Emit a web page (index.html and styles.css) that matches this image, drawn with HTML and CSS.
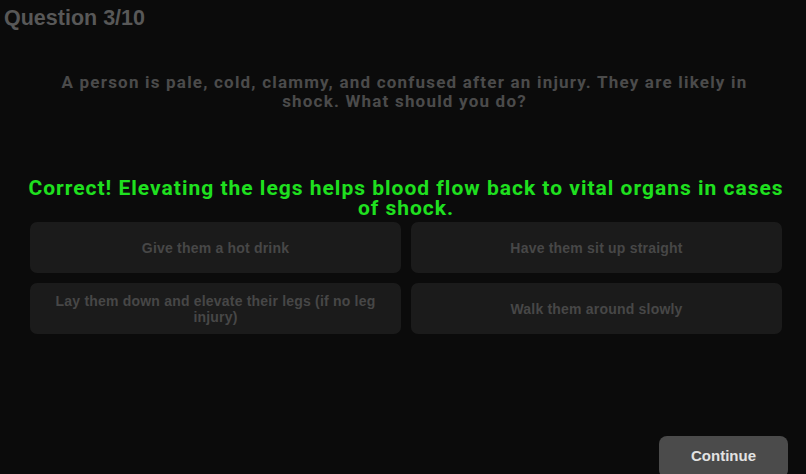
FILE: index.html
```html
<!DOCTYPE html>
<html lang="en">
<head>
<meta charset="utf-8">
<title>Quiz</title>
<link rel="stylesheet" href="styles.css">
</head>
<body>
  <main class="quiz">
    <header class="quiz-header">Question 3/10</header>
    <p class="question">A person is pale, cold, clammy, and confused after an injury. They are likely in shock. What should you do?</p>
    <p class="feedback">Correct! Elevating the legs helps blood flow back to vital organs in cases of shock.</p>
    <div class="options">
      <button class="option">Give them a hot drink</button>
      <button class="option">Have them sit up straight</button>
      <button class="option">Lay them down and elevate their legs (if no leg injury)</button>
      <button class="option">Walk them around slowly</button>
    </div>
    <div class="actions">
      <button class="continue">Continue</button>
    </div>
  </main>
</body>
</html>
```
FILE: styles.css
```css
html, body {
  margin: 0;
  padding: 0;
  height: 100%;
  overflow: hidden;
  background: #0b0b0b;
}

.quiz {
  display: flex;
  flex-direction: column;
  min-height: 100vh;
  font-family: "Liberation Sans", Arial, sans-serif;
  font-weight: bold;
}

.quiz-header {
  padding: 6px 4px;
  font-size: 21.5px;
  line-height: 24px;
  color: #585858;
}

.question {
  margin: 37px 0 0;
  padding: 0 40px 0 43px;
  font-family: Roboto, "Liberation Sans", sans-serif;
  font-size: 17px;
  letter-spacing: 1.2px;
  line-height: 19px;
  text-align: center;
  color: #4b4b4b;
}

.feedback {
  margin: 67px 0 0;
  padding: 0 20px 0 26px;
  font-family: Roboto, "Liberation Sans", sans-serif;
  font-size: 21px;
  letter-spacing: 1px;
  line-height: 20px;
  text-align: center;
  color: #1fe01f;
}

.options {
  display: grid;
  grid-template-columns: 1fr 1fr;
  gap: 10px;
  margin: 4px 0 0;
  padding: 0 24px 0 30px;
}

.option {
  height: 51px;
  padding: 0 22px;
  border: none;
  border-radius: 7px;
  background: #1b1b1b;
  color: #474747;
  font-family: "Liberation Sans", Arial, sans-serif;
  font-weight: bold;
  font-size: 14px;
  letter-spacing: 0.2px;
  line-height: 16px;
}

.actions {
  display: flex;
  justify-content: flex-end;
  margin-top: auto;
  margin-bottom: -4px;
  padding-right: 18px;
}

.continue {
  width: 129px;
  height: 42px;
  padding: 0 0 3px;
  border: none;
  border-radius: 8px;
  background: #4b4b4b;
  color: #e2e2e2;
  font-family: "Liberation Sans", Arial, sans-serif;
  font-weight: bold;
  font-size: 15px;
}
```
